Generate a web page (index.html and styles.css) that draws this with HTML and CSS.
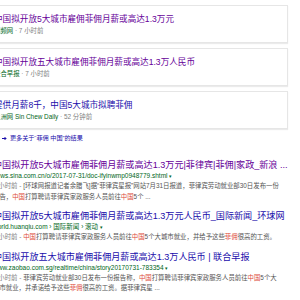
FILE: index.html
```html
<!DOCTYPE html>
<html lang="zh-CN">
<head>
    <meta charset="UTF-8">
    <meta name="viewport" content="width=device-width, initial-scale=1.0">
    <title>菲佣 中国 - 搜索</title>
    <link rel="stylesheet" href="styles.css">
</head>
<body>
    <div class="page">
        <div class="news">
            <div class="card">
                <a class="card-title visited" href="#">中国拟开放5大城市雇佣菲佣月薪或高达1.3万元</a>
                <div class="card-meta"><span class="source">视频网</span> · 7 小时前</div>
            </div>
            <div class="card">
                <a class="card-title visited" href="#">中国拟开放五大城市雇佣菲佣月薪或高达1.3万人民币</a>
                <div class="card-meta"><span class="source">联合早报</span> · 7 小时前</div>
            </div>
            <div class="card">
                <a class="card-title" href="#">提供月薪8千，中国5大城市拟聘菲佣</a>
                <div class="card-meta"><span class="source">星洲网 Sin Chew Daily</span> · 52 分钟前</div>
            </div>
        </div>

        <a class="more" href="#">
            <svg class="arrow" width="5" height="5" viewBox="0 0 5 5"><path d="M0 2.5h4M2.5 1l1.5 1.5-1.5 1.5" fill="none" stroke="#1a0dab" stroke-width="1"/></svg>
            更多关于“菲佣 中国”的结果
        </a>

        <div class="results">
            <div class="result">
                <a class="title visited" href="#">中国拟开放5大城市雇佣菲佣月薪或高达1.3万元|菲律宾|菲佣|家政_新浪 ...</a>
                <div class="url">news.sina.com.cn/o/2017-07-31/doc-ifyinwmp0948779.shtml <span class="caret">▾</span></div>
                <div class="snippet"><span class="date">7 小时前 - </span>[环球网报道记者余腊飞]据“菲律宾星报”网站7月31日报道，菲律宾劳动就业部30日发布一份报告，<em>中国</em>打算聘请菲律宾家政服务人员前往<em>中国</em>5个 ...</div>
            </div>
            <div class="result">
                <a class="title" href="#">中国拟开放5大城市雇佣菲佣月薪或高达1.3万元人民币_国际新闻_环球网</a>
                <div class="url">world.huanqiu.com › 国际新闻 › 滚动 <span class="caret">▾</span></div>
                <div class="snippet"><span class="date">7 小时前 - </span><em>中国</em>打算聘请菲律宾家政服务人员前往<em>中国</em>5个大城市就业，并给予这些<em>菲佣</em>很高的工资。</div>
            </div>
            <div class="result">
                <a class="title" href="#">中国拟开放五大城市雇佣菲佣月薪或高达1.3万人民币 | 联合早报</a>
                <div class="url">www.zaobao.com.sg/realtime/china/story20170731-783354 <span class="caret">▾</span></div>
                <div class="snippet"><span class="date">7 小时前 - </span>菲律宾劳动就业部30日发布一份报告称，<em>中国</em>打算聘请菲律宾家政服务人员前往<em>中国</em>5个大城市就业，并承诺给予这些<em>菲佣</em>很高的工资。据菲律宾星 ...</div>
            </div>
        </div>
    </div>
</body>
</html>
```

FILE: styles.css
```css
body {
    margin: 0;
    background: #fff;
    font-family: "Liberation Sans", "Noto Sans CJK SC", sans-serif;
    overflow: hidden;
}

a {
    text-decoration: none;
}

.page {
    margin-left: -15px;
    padding-top: 5px;
    width: 303px;
}

/* top stories */
.news {
    display: flex;
    flex-direction: column;
    gap: 5px;
}
.card {
    border: 1px solid #e6e6e6;
    box-shadow: 0 1px 1px rgba(0, 0, 0, 0.08);
    padding: 7px 8px 6px 8px;
    background: #fff;
}
.card-title {
    display: block;
    font-size: 8.6px;
    line-height: 12px;
    color: #1a0dab;
    white-space: nowrap;
}
.card-meta {
    font-size: 6.4px;
    line-height: 11px;
    color: #808080;
}
.source {
    color: #006621;
}
.visited {
    color: #660099;
}

.more {
    display: flex;
    align-items: center;
    gap: 3px;
    margin: 4px 0 0 17px;
    font-size: 6.1px;
    line-height: 10px;
    color: #1a0dab;
}
.arrow {
    display: block;
}

/* organic results */
.results {
    padding: 17px 0 0 8px;
    width: 287px;
}
.result {
    margin-bottom: 9px;
}
.title {
    display: block;
    font-size: 9.1px;
    line-height: 11px;
    color: #1a0dab;
    white-space: nowrap;
}
.title.visited {
    color: #660099;
}
.url {
    font-size: 6.5px;
    line-height: 10px;
    color: #006621;
    white-space: nowrap;
}
.caret {
    font-size: 5px;
}
.snippet {
    font-size: 6.4px;
    line-height: 10.5px;
    color: #545454;
}
.date {
    color: #808080;
}
.snippet em {
    font-style: normal;
    color: #dd4b39;
}
```
